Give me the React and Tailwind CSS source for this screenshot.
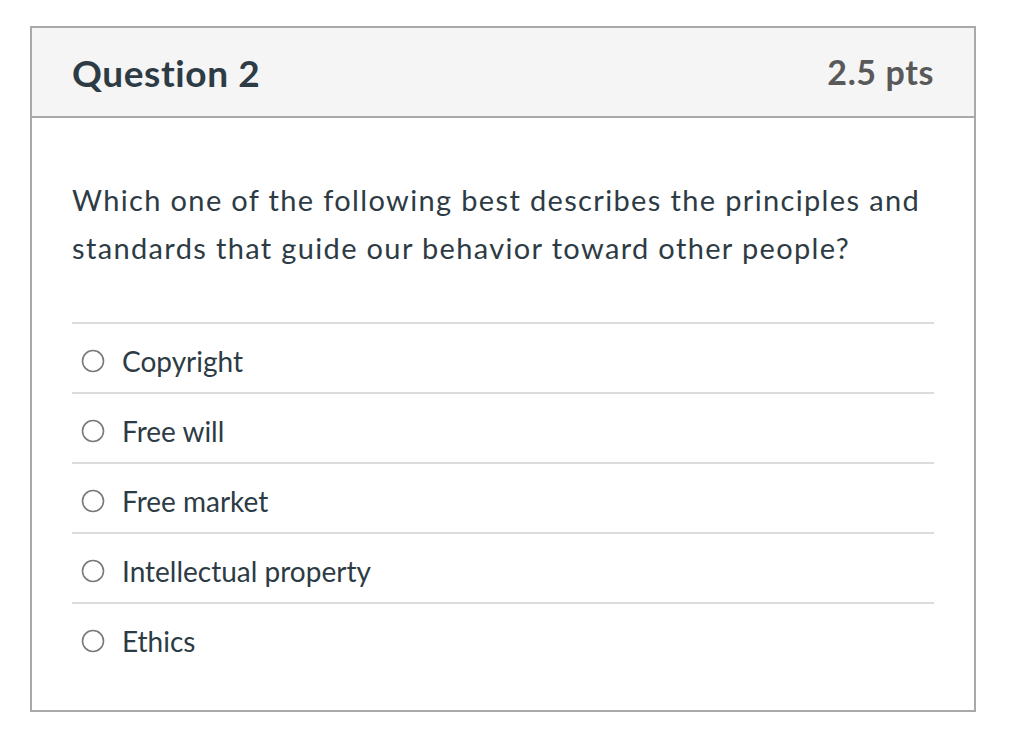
import React, { useState } from 'react';

const answers = ['Copyright', 'Free will', 'Free market', 'Intellectual property', 'Ethics'];

const Radio = ({ checked }) => (
  <svg width="24" height="24" viewBox="0 0 24 24" className="shrink-0">
    <circle cx="12" cy="12" r="10.5" fill="white" stroke="#7a7a7a" strokeWidth="1.6" />
    {checked && <circle cx="12" cy="12" r="5" fill="#2d3b45" />}
  </svg>
);

const App = () => {
  const [selected, setSelected] = useState(null);

  return (
    <div className="min-h-screen bg-white pt-[26px] pl-[30px]" style={{ fontFamily: 'Lato, "Open Sans", sans-serif' }}>
      <div className="w-[946px] border-2 border-[#a9a9a9] bg-white">
        {/* Header */}
        <div className="h-[90px] bg-[#f5f5f5] border-b-2 border-[#a9a9a9] flex items-center justify-between pl-[40px] pr-[40px]">
          <h2 className="text-[37px] font-bold text-[#2d3b45] leading-none tracking-[0.6px]">Question 2</h2>
          <span className="text-[34px] font-bold text-[#595959] leading-none tracking-[0.6px]">2.5 pts</span>
        </div>

        {/* Body */}
        <div className="px-[40px] pt-[58px] pb-[38px]">
          <p className="text-[29px] leading-[48px] tracking-[1.35px] text-[#2d3b45]">
            Which one of the following best describes the principles and standards that guide our behavior toward other people?
          </p>

          <div className="mt-[50px]">
            {answers.map((a, i) => (
              <label
                key={a}
                className="h-[70px] border-t-2 border-[#dcdcdc] flex items-center gap-[17px] pl-[9px] pt-[5px] cursor-pointer"
                onClick={() => setSelected(i)}
              >
                <Radio checked={selected === i} />
                <span className="text-[28px] text-[#2d3b45]">{a}</span>
              </label>
            ))}
          </div>
        </div>
      </div>
    </div>
  );
};

export default App;
